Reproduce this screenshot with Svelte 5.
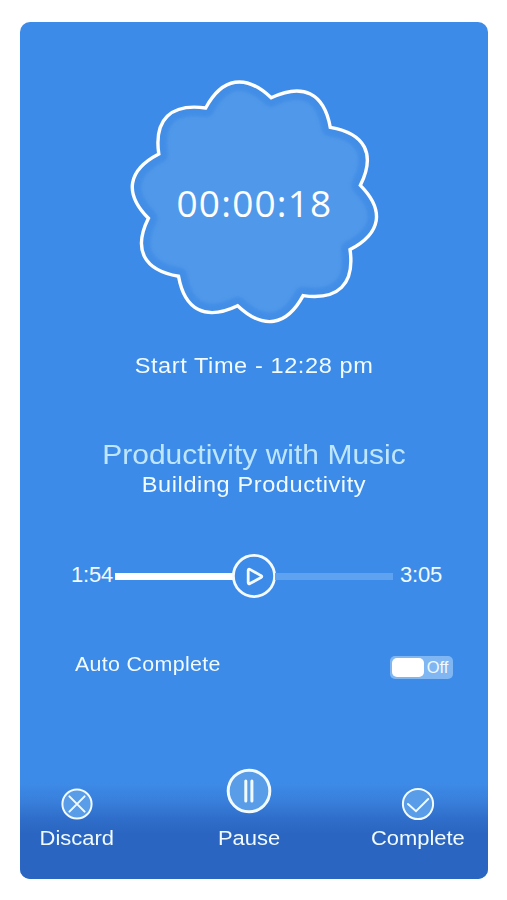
<script lang="ts">
  let elapsed = $state("00:00:18");
  let startTime = $state("12:28 pm");
  let autoComplete = $state(false);

  const track = { title: "Productivity with Music", subtitle: "Building Productivity", position: "1:54", length: "3:05" };

  const LOBES = 10;

  // closed scalloped outline, one cubic curve per lobe
  function badgePath(cx: number, cy: number, rx: number, ry: number) {
    const point = (angle: number, r: number) => {
      const a = (angle * Math.PI) / 180;
      return `${(cx + rx * r * Math.sin(a)).toFixed(2)} ${(cy - ry * r * Math.cos(a)).toFixed(2)}`;
    };
    const step = 360 / LOBES;
    const start = 9;
    let d = `M${point(start, 1)}`;
    for (let i = 0; i < LOBES; i++) {
      const a = start + i * step;
      d += ` C${point(a + 12.8, 1.22)} ${point(a + step - 12.8, 1.22)} ${point(a + step, 1)}`;
    }
    return d + "Z";
  }

  const outline = badgePath(134.4, 131.8, 107.3, 105.3);
</script>

<main class="screen">
  <section class="timer">
    <svg viewBox="0 0 270 265" aria-hidden="true">
      <defs>
        <filter id="soft"><feGaussianBlur stdDeviation="1.5" /></filter>
        <clipPath id="badge"><path d={outline} /></clipPath>
      </defs>
      <path d={outline} fill="#5098e9" />
      <g clip-path="url(#badge)">
        <path d={outline} fill="none" stroke="#428ee7" stroke-width="18" stroke-linejoin="round" filter="url(#soft)" />
      </g>
      <path d={outline} fill="none" stroke="#fff" stroke-width="3.4" />
    </svg>
    <time>{elapsed}</time>
  </section>

  <p class="start">Start Time - {startTime}</p>

  <section class="track">
    <h1>{track.title}</h1>
    <p>{track.subtitle}</p>
  </section>

  <section class="player">
    <span class="time">{track.position}</span>
    <div class="bar played"></div>
    <button class="play" type="button" aria-label="Play">
      <svg width="44" height="44" viewBox="0 0 44 44">
        <circle cx="22" cy="22" r="20.6" />
        <path d="M16.2 16.4v12.2c0 1.1.8 1.4 1.7 1l11.1-6c1.1-.6 1.1-1.5 0-2l-11.1-6.2c-.9-.5-1.7-.2-1.7 1z" />
      </svg>
    </button>
    <div class="bar rest"></div>
    <span class="time">{track.length}</span>
  </section>

  <section class="option">
    <span class="name">Auto Complete</span>
    <button
      class="switch"
      class:on={autoComplete}
      type="button"
      aria-pressed={autoComplete}
      onclick={() => (autoComplete = !autoComplete)}
    >
      <span class="knob"></span>
      <span class="state">{autoComplete ? "On" : "Off"}</span>
    </button>
  </section>

  <footer>
    <button class="action discard" type="button">
      <svg width="32" height="32" viewBox="0 0 32 32">
        <circle cx="16" cy="16" r="14.6" />
        <path d="M8.4 8.4l15.2 15.2M23.6 8.4L8.4 23.6" />
      </svg>
      <span>Discard</span>
    </button>
    <button class="action pause" type="button">
      <svg width="46" height="46" viewBox="0 0 46 46">
        <circle cx="23" cy="23" r="20.8" />
        <path d="M19.8 13v20M25.9 13v20" />
      </svg>
      <span>Pause</span>
    </button>
    <button class="action complete" type="button">
      <svg width="34" height="34" viewBox="0 0 34 34">
        <circle cx="17" cy="17" r="15.1" />
        <path d="M7 17l8 7.2L27.2 12" />
      </svg>
      <span>Complete</span>
    </button>
  </footer>
</main>

<style>
  :global(body) {
    margin: 0;
    background: #fff;
  }

  .screen {
    display: flex;
    flex-direction: column;
    box-sizing: border-box;
    width: 468px;
    height: 857px;
    margin: 22px 0 0 20px;
    overflow: hidden;
    border-radius: 10px;
    background: #3d8be8;
    color: #f0faff;
    font-family: "Liberation Sans", Arial, sans-serif;
  }

  h1,
  p {
    margin: 0;
    font-weight: 400;
  }

  button {
    border: 0;
    padding: 0;
    background: none;
    color: inherit;
    font: inherit;
  }

  svg {
    display: block;
  }

  .timer {
    display: grid;
    width: 270px;
    height: 265px;
    margin: 48px 0 0 100px;
  }

  .timer svg,
  .timer time {
    grid-area: 1 / 1;
  }

  .timer time {
    align-self: center;
    justify-self: center;
    margin-right: 1px;
    color: #fff;
    font-family: "Open Sans", "Noto Sans", sans-serif;
    font-size: 37px;
    line-height: 50px;
    letter-spacing: 1.2px;
  }

  /* slightly extended letterforms */
  .start,
  .track h1,
  .track p,
  .name,
  .action span {
    transform: scaleX(1.07);
  }

  .start {
    margin-top: 16px;
    font-size: 22px;
    line-height: 30px;
    letter-spacing: 0.55px;
    text-align: center;
  }

  .track {
    margin-top: 57px;
    text-align: center;
  }

  .track h1 {
    color: #bfe6ff;
    font-size: 28px;
    line-height: 34px;
    letter-spacing: 0.02px;
  }

  .track p {
    font-size: 22px;
    line-height: 26px;
    letter-spacing: 0.55px;
  }

  .player {
    display: flex;
    align-items: center;
    height: 44px;
    margin: 56px 46px 0 51px;
  }

  .time {
    position: relative;
    top: -1px;
    font-size: 22px;
    letter-spacing: -0.2px;
  }

  .bar {
    height: 7px;
  }

  .played {
    flex: 1;
    margin-left: 2px;
    background: #fff;
  }

  .rest {
    width: 118px;
    margin-right: 7px;
    background: #5fa2ef;
  }

  .play {
    margin: 0 -1px;
  }

  .play svg {
    fill: none;
    stroke: #f4fbff;
    stroke-width: 2.8;
    stroke-linejoin: round;
  }

  .option {
    display: flex;
    align-items: center;
    justify-content: space-between;
    height: 24px;
    margin: 57px 35px 0 55px;
  }

  .name {
    margin-top: -5px;
    font-size: 20px;
    letter-spacing: 0.3px;
    transform-origin: left;
  }

  .switch {
    display: flex;
    align-items: center;
    box-sizing: border-box;
    width: 63px;
    height: 23px;
    padding: 2px;
    border-radius: 5px;
    background: #80b6f1;
  }

  .switch.on {
    flex-direction: row-reverse;
    background: #9fd0ff;
  }

  .knob {
    width: 32px;
    height: 19px;
    border-radius: 5px;
    background: #fff;
  }

  .state {
    flex: 1;
    font-size: 16.5px;
    line-height: 19px;
    text-align: center;
  }

  footer {
    display: flex;
    align-items: flex-end;
    justify-content: space-between;
    box-sizing: border-box;
    height: 121px;
    margin-top: auto;
    padding: 0 26px 29px 22px;
    background: linear-gradient(#3d8be8 24px, #3980dc 42px, #2e6dc9 62px, #2a66c1 76px);
  }

  .action {
    display: flex;
    flex-direction: column;
    align-items: center;
    font-size: 20.5px;
    line-height: 24px;
  }

  .action svg {
    margin-bottom: 5px;
    fill: #599de9;
    stroke: #f0faff;
    stroke-width: 2;
    stroke-linecap: round;
  }

  .action.discard svg {
    margin-bottom: 6px;
  }

  .action.pause {
    margin-left: 12px;
  }

  .action.pause svg {
    margin-bottom: 12px;
    stroke-width: 3;
  }
</style>
